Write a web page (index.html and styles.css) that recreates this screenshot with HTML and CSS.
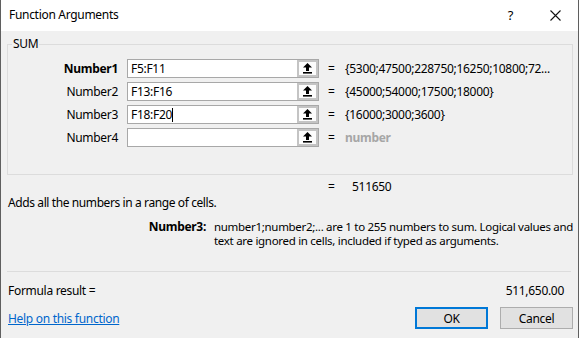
FILE: index.html
```html
<!DOCTYPE html>
<html>
<head>
<meta charset="utf-8">
<link rel="stylesheet" href="styles.css">
</head>
<body>
<div class="dialog">
  <div class="titlebar">
    <div class="title">Function Arguments</div>
    <div class="tb-btn help">?</div>
    <div class="tb-btn close">
      <svg width="11" height="11" viewBox="0 0 11 11"><path d="M0.5 0.5 L10.5 10.5 M10.5 0.5 L0.5 10.5" stroke="#111" stroke-width="1.1" fill="none"/></svg>
    </div>
  </div>
  <div class="body">
    <fieldset class="group">
      <legend class="legend">SUM</legend>
      <div class="arg">
        <div class="arg-label bold">Number1</div>
        <div class="field"><div class="field-text">F5:F11</div><div class="pick"><svg width="9" height="11" viewBox="0 0 9 11"><polygon points="4.5,0 9,4.5 0,4.5" fill="#000"/><rect x="3" y="4" width="3" height="4" fill="#000"/><rect x="0" y="9" width="9" height="1.6" fill="#000"/></svg></div></div>
        <div class="eq">=</div>
        <div class="arg-value">{5300;47500;228750;16250;10800;72...</div>
      </div>
      <div class="arg">
        <div class="arg-label">Number2</div>
        <div class="field"><div class="field-text">F13:F16</div><div class="pick"><svg width="9" height="11" viewBox="0 0 9 11"><polygon points="4.5,0 9,4.5 0,4.5" fill="#000"/><rect x="3" y="4" width="3" height="4" fill="#000"/><rect x="0" y="9" width="9" height="1.6" fill="#000"/></svg></div></div>
        <div class="eq">=</div>
        <div class="arg-value">{45000;54000;17500;18000}</div>
      </div>
      <div class="arg">
        <div class="arg-label">Number3</div>
        <div class="field"><div class="field-text">F18:F20<span class="caret"></span></div><div class="pick"><svg width="9" height="11" viewBox="0 0 9 11"><polygon points="4.5,0 9,4.5 0,4.5" fill="#000"/><rect x="3" y="4" width="3" height="4" fill="#000"/><rect x="0" y="9" width="9" height="1.6" fill="#000"/></svg></div></div>
        <div class="eq">=</div>
        <div class="arg-value">{16000;3000;3600}</div>
      </div>
      <div class="arg">
        <div class="arg-label">Number4</div>
        <div class="field"><div class="field-text"></div><div class="pick"><svg width="9" height="11" viewBox="0 0 9 11"><polygon points="4.5,0 9,4.5 0,4.5" fill="#000"/><rect x="3" y="4" width="3" height="4" fill="#000"/><rect x="0" y="9" width="9" height="1.6" fill="#000"/></svg></div></div>
        <div class="eq">=</div>
        <div class="arg-value placeholder">number</div>
      </div>
    </fieldset>
    <div class="result-row"><span class="eq2">=</span><span class="result">511650</span></div>
    <div class="func-desc">Adds all the numbers in a range of cells.</div>
    <div class="arg-desc">
      <div class="arg-desc-name">Number3:</div>
      <div class="arg-desc-text">number1;number2;... are 1 to 255 numbers to sum. Logical values and<br>text are ignored in cells, included if typed as arguments.</div>
    </div>
    <div class="separator"></div>
    <div class="formula-row"><span>Formula result =</span><span>511,650.00</span></div>
    <div class="footer">
      <a class="help-link" href="#">Help on this function</a>
      <div class="buttons">
        <div class="btn btn-default">OK</div>
        <div class="btn">Cancel</div>
      </div>
    </div>
  </div>
</div>
</body>
</html>
```

FILE: styles.css
```css
* { box-sizing: border-box; }
html, body { margin: 0; padding: 0; background: #ffffff; }
body {
  font-family: "Noto Sans", "Open Sans", sans-serif;
  font-size: 12px;
  letter-spacing: -0.3px;
  color: #000;
}
.dialog {
  width: 579px;
  height: 338px;
  border-left: 1px solid #5f5f5f;
  border-right: 1px solid #5f5f5f;
  background: #f0f0f0;
  display: flex;
  flex-direction: column;
}
.titlebar {
  height: 31px;
  background: #ffffff;
  display: flex;
  align-items: center;
}
.title {
  flex: 1;
  padding-left: 8px;
  font-size: 12px;
  line-height: 16px;
  padding-bottom: 1px;
}
.tb-btn {
  width: 45px;
  height: 31px;
  display: flex;
  align-items: center;
  justify-content: center;
}
.help { font-size: 13px; padding-bottom: 2px; }
.close { padding-bottom: 1px; }
.body {
  flex: 1;
  padding: 0 5px 0 6px;
  display: flex;
  flex-direction: column;
}
.group {
  margin: 5px 0 0 0;
  padding: 7px 0 27px 0;
  border: 1px solid #dcdcdc;
  width: 566px;
  min-width: 0;
  display: flex;
  flex-direction: column;
  gap: 4px;
}
.legend {
  margin-left: 4px;
  padding: 0 1px;
  line-height: 16px;
}
.arg {
  display: flex;
  align-items: center;
  height: 19px;
}
.arg-label {
  width: 110px;
  text-align: right;
}
.bold { font-weight: bold; }
.field {
  margin-left: 9px;
  width: 192px;
  height: 19px;
  border: 1px solid #a8a8a8;
  background: #fff;
  display: flex;
}
.field-text {
  flex: 1;
  padding-left: 3px;
  line-height: 17px;
  display: flex;
  align-items: center;
}
.caret {
  display: inline-block;
  width: 1px;
  height: 14px;
  background: #000;
}
.pick {
  width: 21px;
  height: 17px;
  border: 2px solid #c4c4c4;
  background: #fcfcfc;
  display: flex;
  align-items: center;
  justify-content: center;
}
.eq { margin-left: 9px; width: 8px; }
.arg-value { margin-left: 9px; white-space: nowrap; }
.placeholder { color: #a6a6a6; font-weight: bold; }
.result-row {
  margin-top: 4px;
  height: 16px;
  line-height: 16px;
  padding-left: 321px;
}
.eq2 { display: inline-block; width: 8px; }
.result { margin-left: 16px; }
.func-desc {
  height: 16px;
  line-height: 16px;
  padding-left: 1px;
  letter-spacing: -0.4px;
}
.arg-desc {
  margin-top: 9px;
  display: flex;
  line-height: 14px;
}
.arg-desc-name {
  flex: none;
  width: 199px;
  text-align: right;
  font-weight: bold;
}
.arg-desc-text {
  flex: none;
  margin-left: 8px;
  width: 358px;
  white-space: nowrap;
  font-size: 11.5px;
  letter-spacing: -0.3px;
}
.separator {
  margin-top: 23px;
  height: 1px;
  background: #dcdcdc;
  width: 564px;
}
.formula-row {
  margin-top: 11px;
  height: 16px;
  line-height: 16px;
  display: flex;
  justify-content: space-between;
  padding: 0 9px 0 1px;
}
.footer {
  margin-top: 8px;
  display: flex;
  align-items: center;
  justify-content: space-between;
  height: 22px;
}
.help-link {
  color: #0066cc;
  text-decoration: underline;
  margin-left: 1px;
}
.buttons { display: flex; gap: 12px; }
.btn {
  width: 73px;
  height: 22px;
  border: 1px solid #adadad;
  background: #e1e1e1;
  display: flex;
  align-items: center;
  justify-content: center;
}
.btn-default { border: 2px solid #0078d7; }
```
